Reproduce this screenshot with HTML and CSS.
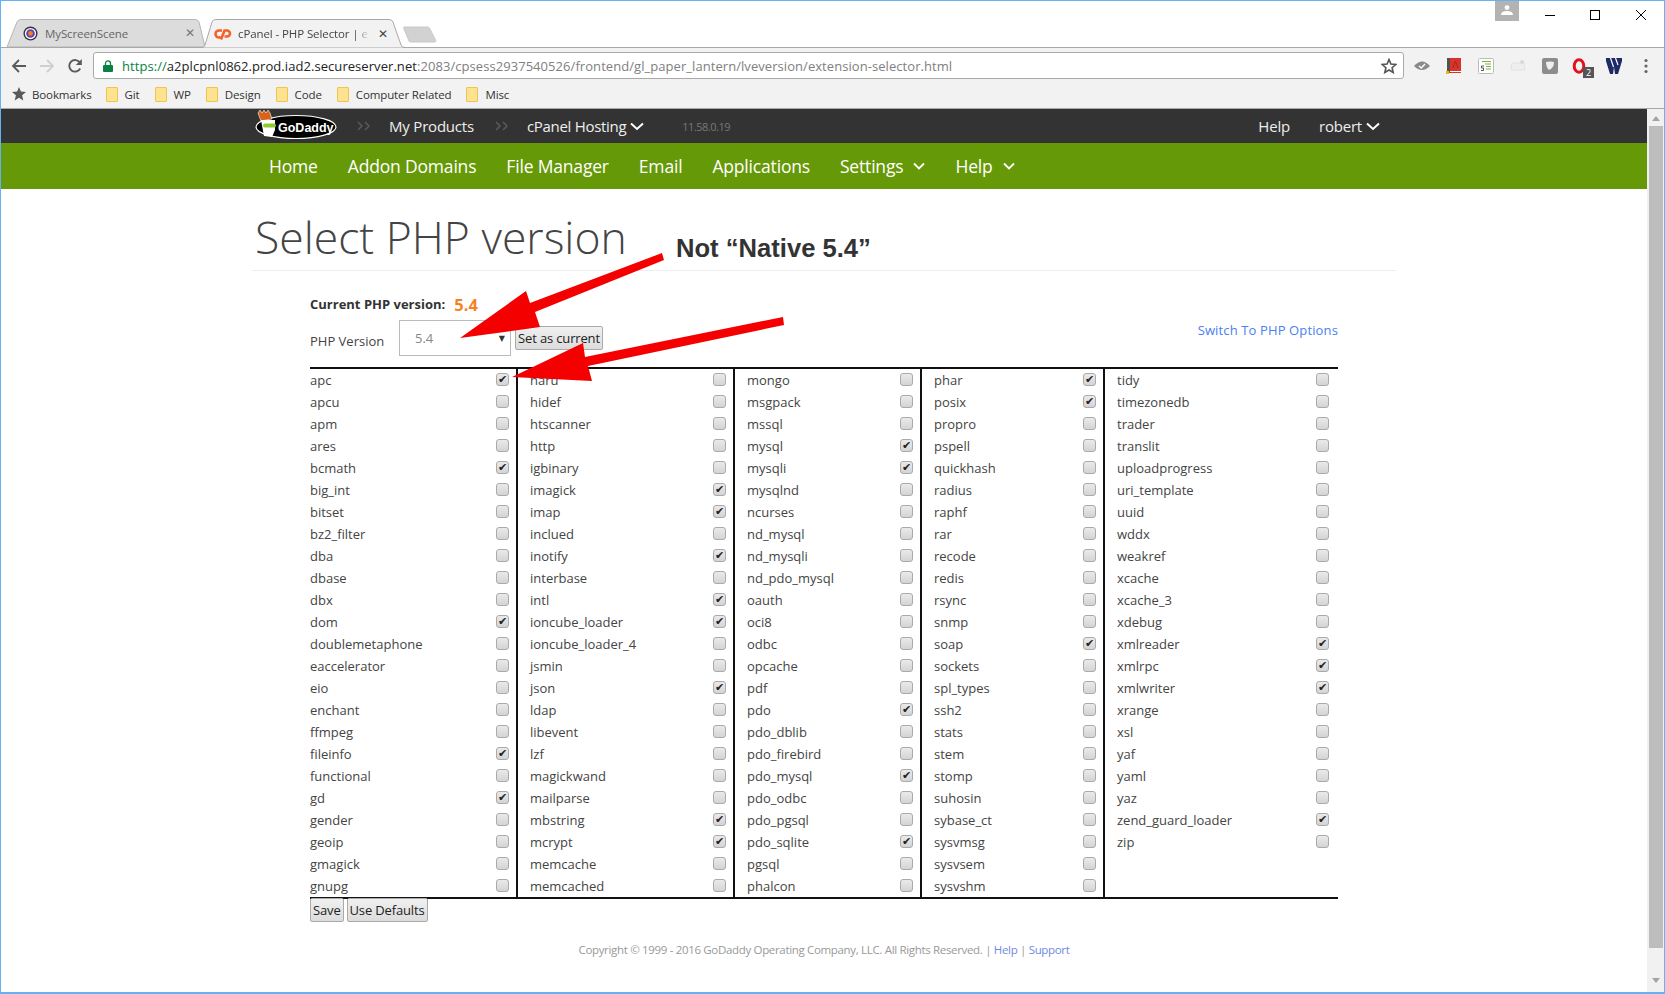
FILE: index.html
```html
<!DOCTYPE html>
<html lang="en">
<head>
<meta charset="utf-8">
<title>cPanel - PHP Selector</title>
<link rel="stylesheet" href="styles.css">
</head>
<body>
<div class="window">
  <header class="tabstrip">
    <div class="tab tab-inactive">
      <svg class="tab-shape" viewBox="0 0 198 28" preserveAspectRatio="none"><path d="M0 28 L10 3 Q11 .5 14 .5 L188 .5 Q191 .5 192 3 L198 28 Z" fill="#dcdcdc" stroke="#b4b4b4"/></svg>
      <svg class="favicon" viewBox="0 0 16 16"><circle cx="8" cy="8" r="7.5" fill="#3a3040"/><circle cx="8" cy="8" r="6" fill="#fff"/><circle cx="8" cy="8" r="4.6" fill="#5c3fc0"/><circle cx="8" cy="8" r="2.6" fill="#f08020"/></svg>
      <span class="tab-title">MyScreenScene</span>
      <span class="tab-x">✕</span>
    </div>
    <div class="tab tab-active">
      <svg class="tab-shape" viewBox="0 0 205 29" preserveAspectRatio="none"><path d="M0 28.5 L2 28.5 Q4 28.5 5 26 L12 3 Q13 .5 16 .5 L189 .5 Q192 .5 193 3 L201 26 Q202 28.5 205 28.5" fill="#f2f2f2" stroke="#a8a8a8"/></svg>
      <svg class="favicon favicon-cp" viewBox="0 0 18 12"><path d="M8 2.5 H5 A3.5 3.5 0 0 0 5 9.5 H7 M7 11.5 L10.5 2.5 H13 A3 3 0 0 1 13 8.5 H10.5" fill="none" stroke="#f4622a" stroke-width="2.6"/></svg>
      <span class="tab-title tab-title-fade">cPanel - PHP Selector | e</span>
      <span class="tab-x tab-x-dark">✕</span>
    </div>
    <svg class="newtab" viewBox="0 0 34 17"><path d="M1 1 H25 Q26 1 27 3 L33 15 Q33 16 31 16 H8 Q6 16 6 15 L1 3 Q0 1 1 1 Z" fill="#d2d2d2" stroke="#c8c8c8"/></svg>
    <div class="window-controls">
      <div class="profile"><svg viewBox="0 0 12 10" class="profile-icon"><circle cx="6" cy="2.6" r="2.4" fill="#fff"/><path d="M0 10 Q0 6 6 6 Q12 6 12 10 Z" fill="#fff"/></svg></div>
      <svg class="winbtn" viewBox="0 0 10 10"><path d="M0 5.5 H10" stroke="#000" fill="none"/></svg>
      <svg class="winbtn" viewBox="0 0 10 10"><rect x=".5" y=".5" width="9" height="9" stroke="#000" fill="none"/></svg>
      <svg class="winbtn" viewBox="0 0 10 10"><path d="M0 0 L10 10 M10 0 L0 10" stroke="#000" fill="none"/></svg>
    </div>
  </header>

  <div class="toolbar">
    <svg class="nav-ico" viewBox="0 0 16 16"><path d="M15 8 H2 M8 2 L2 8 L8 14" fill="none" stroke="#5a5a5a" stroke-width="1.8"/></svg>
    <svg class="nav-ico" viewBox="0 0 16 16"><path d="M1 8 H14 M8 2 L14 8 L8 14" fill="none" stroke="#cfcfcf" stroke-width="1.8"/></svg>
    <svg class="nav-ico" viewBox="0 0 16 16"><path d="M13.2 10.5 A5.8 5.8 0 1 1 13 4.8" fill="none" stroke="#5a5a5a" stroke-width="1.9"/><path d="M14.8 1 V7 H8.8 Z" fill="#5a5a5a"/></svg>
    <div class="omnibox">
      <svg class="lock" viewBox="0 0 10 12"><path d="M2.5 5 V3.4 A2.5 2.5 0 0 1 7.500 3.400 V5" fill="none" stroke="#0b8043" stroke-width="1.3"/><rect y="5" width="10" height="7" rx="1" fill="#0b8043"/></svg>
      <span class="url"><span class="url-scheme">https://</span><span class="url-host">a2plcpnl0862.prod.iad2.secureserver.net</span>:2083/cpsess2937540526/frontend/gl_paper_lantern/lveversion/extension-selector.html</span>
      <svg class="star" viewBox="0 0 16 16"><path d="M8 1.500 L9.900 6.100 L14.800 6.500 L11.100 9.700 L12.200 14.500 L8 12 L3.800 14.500 L4.900 9.700 L1.200 6.500 L6.100 6.100 Z" fill="none" stroke="#555" stroke-width="1.600"/></svg>
    </div>
    <div class="extensions">
      <svg class="ext-ico" viewBox="0 0 16 16"><path d="M0 8 Q8 -1 16 8 Q8 16 0 8 Z" fill="#8a8a8a"/><path d="M5 8 L7.300 10 L11 6" fill="none" stroke="#fff" stroke-width="1.500"/></svg>
      <svg class="ext-ico" viewBox="0 0 16 16"><rect x="1" width="14" height="15" fill="#d6352b"/><rect x="1" width="3" height="15" fill="#56504e"/><rect x="4" y="13" width="11" height="1" fill="#fff"/><path d="M7 10 L9.500 3 L12 10" fill="none" stroke="#b02218"/><rect y="13" width="3" height="3" fill="#f5b400"/></svg>
      <svg class="ext-ico" viewBox="0 0 16 16"><rect x=".5" y=".5" width="15" height="15" rx="1" fill="#fff" stroke="#bbb"/><path d="M4 3.500 H13 M7 6 H13 M8 8.500 H13 M8 11 H13" stroke="#7cb342" stroke-width="1.200"/><path d="M6 8 H3.500 V10 H5.500 V12.500 H3" fill="none" stroke="#555"/></svg>
      <svg class="ext-ico" viewBox="0 0 16 16"><path d="M2 5 H10 M2 5 L1 12 H15 L14 5" fill="#eee" stroke="#e2e2e2"/><circle cx="12" cy="4" r="2" fill="#d8d8d8"/></svg>
      <svg class="ext-ico" viewBox="0 0 16 16"><rect width="16" height="16" rx="2" fill="#8c8c8c"/><path d="M4 4 Q8 3 12 4 Q12 10 7 12 Q4 9 4 4 Z" fill="#eee"/></svg>
      <span class="opera"><svg class="ext-ico" viewBox="0 0 16 16"><ellipse cx="7" cy="8" rx="4.800" ry="6.200" fill="none" stroke="#e0121c" stroke-width="3"/></svg><span class="badge">2</span></span>
      <svg class="ext-ico" viewBox="0 0 16 16"><path d="M0 0 H16 V3 L12 16 H9 L8 9 L7 16 H4 L0 3 Z" fill="#1c2a66"/><path d="M4.500 0 L7.500 9 M9.500 0 L12 7" stroke="#fff" stroke-width="1.200"/></svg>
      <svg class="ext-ico" viewBox="0 0 16 16"><circle cx="8" cy="2.500" r="1.600" fill="#666"/><circle cx="8" cy="8" r="1.600" fill="#666"/><circle cx="8" cy="13.500" r="1.600" fill="#666"/></svg>
    </div>
  </div>

  <nav class="bookmarks">
    <span class="bm bm-root"><svg class="bm-star" viewBox="0 0 14 14"><path d="M7 0 L8.900 4.600 L14 5 L10.100 8.200 L11.300 13.500 L7 10.700 L2.700 13.500 L3.900 8.200 L0 5 L5.100 4.600 Z" fill="#5a5a5a"/></svg>Bookmarks</span>
    <span class="bm"><i class="folder"></i>Git</span>
    <span class="bm"><i class="folder"></i>WP</span>
    <span class="bm"><i class="folder"></i>Design</span>
    <span class="bm"><i class="folder"></i>Code</span>
    <span class="bm"><i class="folder"></i>Computer Related</span>
    <span class="bm"><i class="folder"></i>Misc</span>
  </nav>

  <div class="viewport">
    <div class="page">
      <div class="topbar">
        <svg class="logo" viewBox="0 0 82 32">
          <ellipse cx="41" cy="17" rx="40" ry="11.500" fill="#000" stroke="#fff" stroke-width="1.200"/>
          <path d="M3 3 L5 0 L7 3 L9 0 L11 3 L13 0 L15 3 L17 9 L6 11 Z" fill="#d8641c" stroke="#fff" stroke-width=".6"/>
          <path d="M6 10 H20 V20 L17 27 L9 26 Z" fill="#fff"/>
          <rect x="8" y="13.500" width="13" height="4" rx="2" fill="#8ecb2e"/>
          <text x="23" y="21.500" class="logo-text">GoDaddy</text>
        </svg>
        <svg class="crumb-sep crumb-sep-first" viewBox="0 0 14 10"><path d="M1 1 L5 5 L1 9 M8 1 L12 5 L8 9" fill="none" stroke="#5a5a5a" stroke-width="1.500"/></svg>
        <span class="crumb">My Products</span>
        <svg class="crumb-sep" viewBox="0 0 14 10"><path d="M1 1 L5 5 L1 9 M8 1 L12 5 L8 9" fill="none" stroke="#5a5a5a" stroke-width="1.500"/></svg>
        <span class="crumb crumb-tight">cPanel Hosting</span>
        <svg class="chev" viewBox="0 0 14 9"><path d="M1 1.500 L7 7 L13 1.500" fill="none" stroke="#fff" stroke-width="2"/></svg>
        <span class="build">11.58.0.19</span>
        <span class="crumb topbar-help">Help</span>
        <span class="crumb topbar-user">robert</span>
        <svg class="chev" viewBox="0 0 14 9"><path d="M1 1.500 L7 7 L13 1.500" fill="none" stroke="#fff" stroke-width="2"/></svg>
      </div>
      <nav class="mainnav">
        <span class="nav-item">Home</span>
        <span class="nav-item">Addon Domains</span>
        <span class="nav-item">File Manager</span>
        <span class="nav-item">Email</span>
        <span class="nav-item">Applications</span>
        <span class="nav-item nav-drop">Settings<svg class="chev-nav" viewBox="0 0 12 8"><path d="M1 1.500 L6 6.500 L11 1.500" fill="none" stroke="#fff" stroke-width="1.800"/></svg></span>
        <span class="nav-item nav-drop">Help<svg class="chev-nav" viewBox="0 0 12 8"><path d="M1 1.500 L6 6.500 L11 1.500" fill="none" stroke="#fff" stroke-width="1.800"/></svg></span>
      </nav>

      <main class="main">
        <h1 class="title">Select PHP version</h1>
        <form class="selector">
          <div class="current"><b>Current PHP version:</b><span class="current-value">5.4</span></div>
          <div class="version-row">
            <span class="version-label">PHP Version</span>
            <div class="select"><span>5.4</span><span class="select-arrow">▼</span></div>
            <button type="button" class="btn btn-set">Set as current</button>
            <a class="switch" href="#">Switch To PHP Options</a>
          </div>
          <div class="ext-grid">
            <div class="ext-col col-1">
              <label class="ext"><span>apc</span><input type="checkbox" checked></label>
              <label class="ext"><span>apcu</span><input type="checkbox"></label>
              <label class="ext"><span>apm</span><input type="checkbox"></label>
              <label class="ext"><span>ares</span><input type="checkbox"></label>
              <label class="ext"><span>bcmath</span><input type="checkbox" checked></label>
              <label class="ext"><span>big_int</span><input type="checkbox"></label>
              <label class="ext"><span>bitset</span><input type="checkbox"></label>
              <label class="ext"><span>bz2_filter</span><input type="checkbox"></label>
              <label class="ext"><span>dba</span><input type="checkbox"></label>
              <label class="ext"><span>dbase</span><input type="checkbox"></label>
              <label class="ext"><span>dbx</span><input type="checkbox"></label>
              <label class="ext"><span>dom</span><input type="checkbox" checked></label>
              <label class="ext"><span>doublemetaphone</span><input type="checkbox"></label>
              <label class="ext"><span>eaccelerator</span><input type="checkbox"></label>
              <label class="ext"><span>eio</span><input type="checkbox"></label>
              <label class="ext"><span>enchant</span><input type="checkbox"></label>
              <label class="ext"><span>ffmpeg</span><input type="checkbox"></label>
              <label class="ext"><span>fileinfo</span><input type="checkbox" checked></label>
              <label class="ext"><span>functional</span><input type="checkbox"></label>
              <label class="ext"><span>gd</span><input type="checkbox" checked></label>
              <label class="ext"><span>gender</span><input type="checkbox"></label>
              <label class="ext"><span>geoip</span><input type="checkbox"></label>
              <label class="ext"><span>gmagick</span><input type="checkbox"></label>
              <label class="ext"><span>gnupg</span><input type="checkbox"></label>
            </div>
            <div class="ext-col">
              <label class="ext"><span>haru</span><input type="checkbox"></label>
              <label class="ext"><span>hidef</span><input type="checkbox"></label>
              <label class="ext"><span>htscanner</span><input type="checkbox"></label>
              <label class="ext"><span>http</span><input type="checkbox"></label>
              <label class="ext"><span>igbinary</span><input type="checkbox"></label>
              <label class="ext"><span>imagick</span><input type="checkbox" checked></label>
              <label class="ext"><span>imap</span><input type="checkbox" checked></label>
              <label class="ext"><span>inclued</span><input type="checkbox"></label>
              <label class="ext"><span>inotify</span><input type="checkbox" checked></label>
              <label class="ext"><span>interbase</span><input type="checkbox"></label>
              <label class="ext"><span>intl</span><input type="checkbox" checked></label>
              <label class="ext"><span>ioncube_loader</span><input type="checkbox" checked></label>
              <label class="ext"><span>ioncube_loader_4</span><input type="checkbox"></label>
              <label class="ext"><span>jsmin</span><input type="checkbox"></label>
              <label class="ext"><span>json</span><input type="checkbox" checked></label>
              <label class="ext"><span>ldap</span><input type="checkbox"></label>
              <label class="ext"><span>libevent</span><input type="checkbox"></label>
              <label class="ext"><span>lzf</span><input type="checkbox"></label>
              <label class="ext"><span>magickwand</span><input type="checkbox"></label>
              <label class="ext"><span>mailparse</span><input type="checkbox"></label>
              <label class="ext"><span>mbstring</span><input type="checkbox" checked></label>
              <label class="ext"><span>mcrypt</span><input type="checkbox" checked></label>
              <label class="ext"><span>memcache</span><input type="checkbox"></label>
              <label class="ext"><span>memcached</span><input type="checkbox"></label>
            </div>
            <div class="ext-col">
              <label class="ext"><span>mongo</span><input type="checkbox"></label>
              <label class="ext"><span>msgpack</span><input type="checkbox"></label>
              <label class="ext"><span>mssql</span><input type="checkbox"></label>
              <label class="ext"><span>mysql</span><input type="checkbox" checked></label>
              <label class="ext"><span>mysqli</span><input type="checkbox" checked></label>
              <label class="ext"><span>mysqlnd</span><input type="checkbox"></label>
              <label class="ext"><span>ncurses</span><input type="checkbox"></label>
              <label class="ext"><span>nd_mysql</span><input type="checkbox"></label>
              <label class="ext"><span>nd_mysqli</span><input type="checkbox"></label>
              <label class="ext"><span>nd_pdo_mysql</span><input type="checkbox"></label>
              <label class="ext"><span>oauth</span><input type="checkbox"></label>
              <label class="ext"><span>oci8</span><input type="checkbox"></label>
              <label class="ext"><span>odbc</span><input type="checkbox"></label>
              <label class="ext"><span>opcache</span><input type="checkbox"></label>
              <label class="ext"><span>pdf</span><input type="checkbox"></label>
              <label class="ext"><span>pdo</span><input type="checkbox" checked></label>
              <label class="ext"><span>pdo_dblib</span><input type="checkbox"></label>
              <label class="ext"><span>pdo_firebird</span><input type="checkbox"></label>
              <label class="ext"><span>pdo_mysql</span><input type="checkbox" checked></label>
              <label class="ext"><span>pdo_odbc</span><input type="checkbox"></label>
              <label class="ext"><span>pdo_pgsql</span><input type="checkbox"></label>
              <label class="ext"><span>pdo_sqlite</span><input type="checkbox" checked></label>
              <label class="ext"><span>pgsql</span><input type="checkbox"></label>
              <label class="ext"><span>phalcon</span><input type="checkbox"></label>
            </div>
            <div class="ext-col">
              <label class="ext"><span>phar</span><input type="checkbox" checked></label>
              <label class="ext"><span>posix</span><input type="checkbox" checked></label>
              <label class="ext"><span>propro</span><input type="checkbox"></label>
              <label class="ext"><span>pspell</span><input type="checkbox"></label>
              <label class="ext"><span>quickhash</span><input type="checkbox"></label>
              <label class="ext"><span>radius</span><input type="checkbox"></label>
              <label class="ext"><span>raphf</span><input type="checkbox"></label>
              <label class="ext"><span>rar</span><input type="checkbox"></label>
              <label class="ext"><span>recode</span><input type="checkbox"></label>
              <label class="ext"><span>redis</span><input type="checkbox"></label>
              <label class="ext"><span>rsync</span><input type="checkbox"></label>
              <label class="ext"><span>snmp</span><input type="checkbox"></label>
              <label class="ext"><span>soap</span><input type="checkbox" checked></label>
              <label class="ext"><span>sockets</span><input type="checkbox"></label>
              <label class="ext"><span>spl_types</span><input type="checkbox"></label>
              <label class="ext"><span>ssh2</span><input type="checkbox"></label>
              <label class="ext"><span>stats</span><input type="checkbox"></label>
              <label class="ext"><span>stem</span><input type="checkbox"></label>
              <label class="ext"><span>stomp</span><input type="checkbox"></label>
              <label class="ext"><span>suhosin</span><input type="checkbox"></label>
              <label class="ext"><span>sybase_ct</span><input type="checkbox"></label>
              <label class="ext"><span>sysvmsg</span><input type="checkbox"></label>
              <label class="ext"><span>sysvsem</span><input type="checkbox"></label>
              <label class="ext"><span>sysvshm</span><input type="checkbox"></label>
            </div>
            <div class="ext-col col-5">
              <label class="ext"><span>tidy</span><input type="checkbox"></label>
              <label class="ext"><span>timezonedb</span><input type="checkbox"></label>
              <label class="ext"><span>trader</span><input type="checkbox"></label>
              <label class="ext"><span>translit</span><input type="checkbox"></label>
              <label class="ext"><span>uploadprogress</span><input type="checkbox"></label>
              <label class="ext"><span>uri_template</span><input type="checkbox"></label>
              <label class="ext"><span>uuid</span><input type="checkbox"></label>
              <label class="ext"><span>wddx</span><input type="checkbox"></label>
              <label class="ext"><span>weakref</span><input type="checkbox"></label>
              <label class="ext"><span>xcache</span><input type="checkbox"></label>
              <label class="ext"><span>xcache_3</span><input type="checkbox"></label>
              <label class="ext"><span>xdebug</span><input type="checkbox"></label>
              <label class="ext"><span>xmlreader</span><input type="checkbox" checked></label>
              <label class="ext"><span>xmlrpc</span><input type="checkbox" checked></label>
              <label class="ext"><span>xmlwriter</span><input type="checkbox" checked></label>
              <label class="ext"><span>xrange</span><input type="checkbox"></label>
              <label class="ext"><span>xsl</span><input type="checkbox"></label>
              <label class="ext"><span>yaf</span><input type="checkbox"></label>
              <label class="ext"><span>yaml</span><input type="checkbox"></label>
              <label class="ext"><span>yaz</span><input type="checkbox"></label>
              <label class="ext"><span>zend_guard_loader</span><input type="checkbox" checked></label>
              <label class="ext"><span>zip</span><input type="checkbox"></label>
            </div>
          </div>
          <div class="actions">
            <button type="button" class="btn">Save</button>
            <button type="button" class="btn">Use Defaults</button>
          </div>
        </form>
        <footer class="footer">Copyright © 1999 - 2016 GoDaddy Operating Company, LLC. All Rights Reserved. | <a href="#">Help</a> | <a href="#">Support</a></footer>
      </main>
    </div>
    <aside class="scrollbar">
      <i class="sb-up"></i>
      <i class="sb-thumb"></i>
      <i class="sb-down"></i>
    </aside>
  </div>

  <svg class="arrows" viewBox="0 0 1665 994">
    <polygon points="662,253 664,260 535,312 540,327 460,338 526,291 530,303" fill="#f50000"/>
    <polygon points="783,317 784,325 588,366 592,381 512,377 583,343 585,357" fill="#f50000"/>
  </svg>
  <div class="callout">Not “Native 5.4”</div>
</div>
</body>
</html>
```

FILE: styles.css
```css
* { box-sizing: border-box; }
html, body { margin: 0; padding: 0; }
body { font-family: "Open Sans", "Noto Sans", sans-serif; color: #333; background: #fff; }

.window {
  position: relative;
  width: 1665px;
  height: 994px;
  border: 1px solid #64b1f5;
  border-bottom-width: 2px;
  overflow: hidden;
  display: flex;
  flex-direction: column;
  background: #fff;
}

/* tab strip */
.tabstrip {
  height: 46px;
  flex: none;
  display: flex;
  align-items: flex-end;
  padding-left: 6px;
  background: #fff;
}
.tab {
  position: relative;
  height: 28px;
  display: flex;
  align-items: center;
  font-size: 11.5px;
  color: #666;
}
.tab-shape { position: absolute; left: 0; top: 0; width: 100%; height: 100%; }
.tab-inactive { width: 198px; padding-left: 16px; }
.tab-active { width: 205px; margin-left: -5px; padding-left: 14px; z-index: 1; color: #444; height: 29px; margin-bottom: -1px; }
.favicon { position: relative; width: 15px; height: 15px; flex: none; }
.favicon-cp { width: 18px; height: 12px; }
.tab-title { position: relative; margin-left: 7px; width: 126px; white-space: nowrap; overflow: hidden; letter-spacing: -.1px; }
.tab-title-fade { width: 132px; margin-left: 6px; -webkit-mask-image: linear-gradient(to right, #000 88%, transparent); mask-image: linear-gradient(to right, #000 88%, transparent); }
.tab-x { position: relative; margin-left: 14px; font-size: 12px; color: #777; font-family: "DejaVu Sans", sans-serif; }
.tab-x-dark { color: #444; margin-left: 8px; }
.newtab { width: 34px; height: 17px; margin-left: -2px; margin-bottom: 4px; flex: none; }
.window-controls { margin-left: auto; align-self: flex-start; display: flex; align-items: flex-start; padding-right: 18px; }
.profile { width: 24px; height: 20px; background: #b3b3b3; display: flex; align-items: center; justify-content: center; margin-right: 26px; }
.profile-icon { width: 12px; height: 10px; margin-top: -3px; }
.winbtn { width: 10px; height: 10px; margin-top: 9px; margin-right: 35px; }
.winbtn:nth-child(3) { margin-right: 36px; }
.winbtn:last-child { margin-right: 0; }

/* toolbar */
.toolbar {
  height: 36px;
  flex: none;
  display: flex;
  align-items: center;
  background: #f2f2f2;
  border-top: 1px solid #a8a8a8;
  padding-left: 10px;
}
.nav-ico { width: 16px; height: 16px; margin-right: 12px; flex: none; }
.nav-ico:nth-child(3) { margin-right: 10px; }
.omnibox {
  width: 1311px;
  height: 27px;
  flex: none;
  display: flex;
  align-items: center;
  background: #fff;
  border: 1px solid #aaa;
  border-radius: 3px;
  padding: 0 6px 0 9px;
}
.lock { width: 10px; height: 12px; flex: none; margin-right: 9px; }
.url { font-size: 13px; color: #808080; white-space: nowrap; flex: 1; letter-spacing: .06px; }
.url-scheme { color: #0b8043; }
.url-host { color: #222; }
.star { width: 16px; height: 16px; flex: none; }
.extensions { display: flex; align-items: center; padding-left: 10px; gap: 16px; }
.ext-ico { width: 16px; height: 16px; display: block; flex: none; }
.opera { position: relative; display: block; margin-left: -2px; margin-right: 2px; }
.badge { position: absolute; left: 11px; top: 9px; width: 11px; height: 11px; background: #555; color: #fff; font-size: 9px; line-height: 11px; text-align: center; }

/* bookmarks */
.bookmarks {
  height: 26px;
  flex: none;
  display: flex;
  align-items: center;
  background: #f2f2f2;
  border-bottom: 1px solid #a8a8a8;
  padding: 0 0 3px 11px;
  font-size: 11.5px;
  color: #333;
}
.bm { display: flex; align-items: center; margin-right: 15px; white-space: nowrap; letter-spacing: -.12px; }
.bm-star { width: 14px; height: 14px; margin-right: 6px; }
.folder { display: block; width: 12px; height: 15px; margin-right: 7px; background: #fde38f; border: 1px solid #eec550; border-radius: 1px; }
.bm-root { margin-right: 14px; }

/* page */
.viewport { flex: 1; display: flex; min-height: 0; }
.page { flex: 1; min-width: 0; }
.scrollbar { width: 17px; flex: none; background: #f1f1f1; display: flex; flex-direction: column; align-items: center; }
.sb-up { width: 0; height: 0; margin-top: 7px; border: 4px solid transparent; border-top: 0; border-bottom: 5px solid #a3a3a3; }
.sb-thumb { width: 14px; height: 822px; margin-top: 5px; background: #bdbdbd; }
.sb-down { width: 0; height: 0; margin-top: 30px; border: 4px solid transparent; border-bottom: 0; border-top: 5px solid #a3a3a3; }

.topbar {
  height: 34px;
  display: flex;
  align-items: center;
  background: #333;
  padding: 0 267px 0 254px;
  color: #eee;
  font-size: 15px;
}
.logo { width: 82px; height: 32px; flex: none; margin-right: 20px; }
.logo-text { font-family: "Liberation Sans", sans-serif; font-weight: 700; font-size: 12.5px; fill: #fff; }
.crumb-sep { width: 14px; height: 10px; flex: none; margin-right: 18px; }
.crumb { white-space: nowrap; letter-spacing: -.2px; }
.crumb-tight { letter-spacing: -.3px; }
.crumb + .crumb-sep { margin-left: 21px; }
.chev { width: 14px; height: 9px; margin-left: 4px; flex: none; }
.build { font-size: 11px; color: #777; margin-left: 38px; letter-spacing: -.5px; }
.topbar-help { margin-left: auto; margin-right: 29px; }

.mainnav {
  height: 46px;
  display: flex;
  align-items: center;
  gap: 30px;
  background: #669907;
  padding-left: 268px;
  color: #fff;
  font-size: 17.5px;
}
.nav-item { white-space: nowrap; letter-spacing: -.18px; }
.nav-drop { display: flex; align-items: center; }
.chev-nav { width: 12px; height: 8px; margin-left: 10px; }

.main { width: 1144px; margin: 0 auto; }
.title {
  margin: 0;
  height: 82px;
  padding: 18px 0 0 3px;
  border-bottom: 1px solid #eee;
  font-size: 44.5px;
  line-height: 60px;
  font-weight: 300;
  color: #444;
  white-space: nowrap;
}
.selector { padding: 0 58px; }
.current { margin-top: 22px; height: 22px; display: flex; align-items: center; font-size: 13px; color: #333; }
.current-value { margin-left: 9px; font-size: 16.5px; font-weight: 700; color: #f6821f; }
.version-row { position: relative; display: flex; align-items: center; height: 36px; margin-top: 5px; }
.version-label { font-size: 13px; width: 89px; padding-top: 6px; color: #444; }
.select { width: 112px; height: 36px; border: 1px solid #bbb; display: flex; align-items: center; justify-content: space-between; padding: 0 5px 0 15px; font-size: 13px; color: #888; }
.select-arrow { font-size: 8px; color: #333; font-family: "DejaVu Sans", sans-serif; }
.btn { height: 24px; padding: 0 2px; border: 1px solid #aaa; border-radius: 2px; background: linear-gradient(#f0f0f0, #dcdcdc); font-family: "Open Sans", sans-serif; font-size: 13px; color: #222; white-space: nowrap; letter-spacing: -.15px; }
.btn-set { width: 88px; margin-left: 4px; }
.switch { margin-left: auto; align-self: flex-start; margin-top: 1px; font-size: 13px; letter-spacing: .13px; color: #4a80f0; text-decoration: none; }

.ext-grid {
  display: grid;
  grid-template-columns: 208px 217px 187px 183px 233px;
  margin-top: 11px;
  border-top: 2px solid #111;
  border-bottom: 2px solid #111;
}
.ext-col { border-right: 2px solid #111; padding: 0 7px 0 12px; }
.col-1 { padding-left: 0; }
.col-5 { border-right: 0; padding-right: 9px; }
.ext { display: flex; align-items: center; justify-content: space-between; height: 22px; font-size: 13px; color: #444; }
.ext input {
  appearance: none;
  position: relative;
  width: 13px;
  height: 13px;
  margin: -2px 0 0;
  border: 1px solid #aaa;
  border-radius: 3px;
  background: linear-gradient(#eaeaea, #d4d4d4);
}
.ext input:checked::after {
  content: "✔";
  position: absolute;
  left: 1px;
  top: -1px;
  font: 11px/13px "DejaVu Sans", sans-serif;
  color: #222;
}
.actions { display: flex; gap: 3px; margin-top: -1px; }
.footer { margin-top: 20px; text-align: center; font-size: 11.5px; color: #999; letter-spacing: -.33px; }
.footer a { color: #6f8ae0; text-decoration: none; }

/* annotation overlay */
.arrows { position: absolute; left: -1px; top: -1px; width: 1665px; height: 994px; pointer-events: none; }
.callout { position: absolute; left: 675px; top: 232px; font-family: "Liberation Sans", sans-serif; font-weight: 700; font-size: 25.6px; line-height: 30px; color: #333; white-space: nowrap; }
```
